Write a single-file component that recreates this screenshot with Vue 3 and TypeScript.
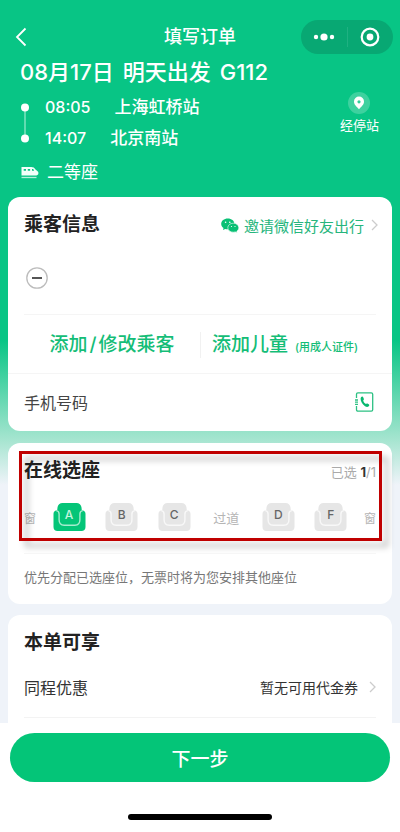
<script setup lang="ts">
import { ref } from 'vue'

interface Cell {
  kind: 'seat' | 'label'
  text: string
  slot: string
}

const cells: Cell[] = [
  { kind: 'label', text: '窗', slot: 'edge' },
  { kind: 'seat', text: 'A', slot: 'seat' },
  { kind: 'seat', text: 'B', slot: 'seat' },
  { kind: 'seat', text: 'C', slot: 'seat' },
  { kind: 'label', text: '过道', slot: 'aisle' },
  { kind: 'seat', text: 'D', slot: 'seat' },
  { kind: 'seat', text: 'F', slot: 'seat' },
  { kind: 'label', text: '窗', slot: 'edge' },
]

const selected = ref('A')
</script>

<template>
  <div class="page">
    <header class="top">
      <nav class="nav">
        <button class="back" type="button" aria-label="返回">
          <svg width="12" height="20" viewBox="0 0 12 20" fill="none" stroke="#fff" stroke-width="1.8">
            <path d="M10.500 1.500 2 10l8.500 8.500" />
          </svg>
        </button>
        <h1>填写订单</h1>
        <div class="capsule">
          <button type="button" aria-label="更多">
            <svg width="22" height="10" viewBox="0 0 22 10" fill="#fff">
              <circle cx="3" cy="5" r="2.200" /><circle cx="11" cy="5" r="3.600" /><circle cx="19" cy="5" r="2.200" />
            </svg>
          </button>
          <i class="split"></i>
          <button type="button" aria-label="关闭">
            <svg width="20" height="20" viewBox="0 0 20 20">
              <circle cx="10" cy="10" r="8.300" fill="none" stroke="#fff" stroke-width="2.200" />
              <circle cx="10" cy="10" r="3.400" fill="#fff" />
            </svg>
          </button>
        </div>
      </nav>

      <h2 class="trip"><span>08月17日</span><span>明天出发</span><span>G112</span></h2>

      <div class="route">
        <svg class="track" width="8" height="40" viewBox="0 0 8 40">
          <path d="M4 4v32" stroke="#7fe3c0" stroke-width="1.500" />
          <circle cx="4" cy="4.500" r="4" fill="#fff" /><circle cx="4" cy="35.500" r="4" fill="#fff" />
        </svg>
        <div class="stops">
          <p><time>08:05</time><span>上海虹桥站</span></p>
          <p><time>14:07</time><span>北京南站</span></p>
        </div>
        <button class="via" type="button">
          <svg width="22" height="22" viewBox="0 0 22 22">
            <circle cx="11" cy="11" r="11" fill="#fff" fill-opacity=".22" />
            <path d="M11 4.500a5 5 0 0 0-5 5c0 3.200 2.600 5 5 7.700 2.400-2.700 5-4.500 5-7.700a5 5 0 0 0-5-5z" fill="#fff" />
            <circle cx="11" cy="9.800" r="1.600" fill="#2fcf98" />
          </svg>
          经停站
        </button>
      </div>

      <p class="class">
        <svg width="18" height="13" viewBox="0 0 18 13">
          <path d="M.5 1h9.700c2 0 3.300.8 4.300 2.500l2.600 2.300c.9 1.600 0 3.600-1.800 3.600H.5z" fill="#f2fffa" />
          <path d="M2.700 3h2.300v1.700H2.700zM6.800 3h2.300v1.700H6.800zM11 3h1.200l1 1.700H11z" fill="#08c585" />
          <path d="M.5 11.500h15" stroke="#b5f0da" stroke-width="1.300" />
        </svg>
        二等座
      </p>
    </header>

    <main class="cards">
      <section class="card passenger">
        <div class="head">
          <h3>乘客信息</h3>
          <a class="invite" href="#">
            <svg width="18" height="15" viewBox="0 0 18 15">
              <path d="M6.800.5C3 .5.2 2.900.2 5.900c0 1.700.9 3.100 2.300 4.100L2 12l2.200-1.100c.9.300 1.700.4 2.600.4 3.700 0 6.600-2.400 6.600-5.400S10.500.5 6.800.5z" fill="#08c074" />
              <path d="M12.300 5.200c3.100 0 5.500 2 5.500 4.500 0 1.400-.8 2.600-2 3.500l.4 1.600-1.800-.9c-.7.200-1.400.3-2.100.3-3.100 0-5.500-2-5.500-4.500s2.400-4.500 5.500-4.500z" fill="#08c074" stroke="#fff" stroke-width=".6" />
              <circle cx="4.600" cy="4.200" r=".8" fill="#fff" /><circle cx="8.800" cy="4.200" r=".8" fill="#fff" />
              <circle cx="10.500" cy="8.500" r=".6" fill="#fff" /><circle cx="14" cy="8.500" r=".6" fill="#fff" />
            </svg>
            <span>邀请微信好友出行</span>
            <svg class="chevron" width="7" height="12" viewBox="0 0 7 12"><path d="m1 1 5 5-5 5" /></svg>
          </a>
        </div>
        <div class="person">
          <button type="button" aria-label="移除乘客">
            <svg width="22" height="22" viewBox="0 0 22 22">
              <circle cx="11" cy="11" r="10.200" fill="none" stroke="#bcbcbc" stroke-width="1.300" />
              <path d="M6 11h10" stroke="#555" stroke-width="2" />
            </svg>
          </button>
        </div>
        <div class="adders">
          <button type="button">添加<span class="slash">/</span>修改乘客</button>
          <button type="button">添加儿童<small>(用成人证件)</small></button>
        </div>
        <div class="phone">
          <span>手机号码</span>
          <button type="button" aria-label="通讯录">
            <svg width="20" height="20" viewBox="0 0 20 20" fill="none" stroke="#2cc183" stroke-width="1.300">
              <path d="M2.500 6V2.200C2.500 1.300 3 .8 3.900.8h13.400c.9 0 1.400.5 1.400 1.400v15.600c0 .9-.5 1.400-1.400 1.400H3.900c-.9 0-1.400-.5-1.400-1.400V14" />
              <path d="M1 8h3M1 10.200h3M1 12.400h3" />
              <path d="M7 5.300c.8-1 1.900-.9 2.300.1l.6 1.500c.2.700-.9 1.200-.7 1.900.4 1.200 1.200 2.200 2.200 2.900.7.400 1.300-.6 2-.2l1.300.8c.9.600.7 1.700-.3 2.300-1.500.9-3.800-.2-5.500-2.300C7.100 10.200 5.900 6.900 7 5.300z" fill="#08b86f" stroke="none" />
            </svg>
          </button>
        </div>
      </section>

      <section class="card seats">
        <div class="picker">
          <div class="head">
            <h3>在线选座</h3>
            <span class="count">已选 <b>1</b>/1</span>
          </div>
          <div class="row">
            <template v-for="(cell, i) in cells" :key="i">
              <span v-if="cell.kind === 'label'" :class="cell.slot">{{ cell.text }}</span>
              <button
                v-else
                type="button"
                :class="[cell.slot, { on: selected === cell.text }]"
                :aria-pressed="selected === cell.text"
                @click="selected = cell.text"
              >
                <svg width="33" height="28" viewBox="0 0 33 28">
                  <path class="fill" d="M9.500 0h14c2.600 0 4.800 2 5 4.600l.3 2.700c2 0 3.700 1.400 3.700 3.400V24c0 2.400-1.600 4-4 4h-24c-2.400 0-4-1.600-4-4V10.700c0-2 1.700-3.400 3.700-3.400l.3-2.700C4.700 2 6.900 0 9.500 0z" />
                  <path class="line" d="M3.200 7.600c2.200.2 2.900 1.400 2.900 3.400v5.800c0 3.400 1.800 5.400 5 5.400h10.800c3.200 0 5-2 5-5.400V11c0-2 .7-3.200 2.900-3.400" />
                </svg>
                <span>{{ cell.text }}</span>
              </button>
            </template>
          </div>
          <div class="frame"></div>
        </div>
        <p class="note">优先分配已选座位，无票时将为您安排其他座位</p>
      </section>

      <section class="card benefits">
        <h3>本单可享</h3>
        <a class="offer" href="#">
          <span>同程优惠</span>
          <em>暂无可用代金券</em>
          <svg class="chevron" width="7" height="12" viewBox="0 0 7 12"><path d="m1 1 5 5-5 5" /></svg>
        </a>
      </section>
    </main>

    <footer class="bottom">
      <button type="button" class="next">下一步</button>
      <i class="home"></i>
    </footer>
  </div>
</template>

<style>
body {
  margin: 0;
}
</style>

<style scoped>
.page {
  display: flex;
  flex-direction: column;
  min-height: 100vh;
  box-sizing: border-box;
  background: linear-gradient(#08c585 0, #08c585 340px, #a6e5d0 440px, #eff3f9 485px);
  font-family: Inter, "Noto Sans CJK SC", sans-serif;
  color: #222;
}
h1, h2, h3, p {
  margin: 0;
  font-weight: 500;
}
button {
  padding: 0;
  border: 0;
  background: none;
  font: inherit;
  color: inherit;
  cursor: pointer;
}
a {
  color: inherit;
  text-decoration: none;
}
svg {
  display: block;
  flex: none;
}
.top {
  padding: 20px 20px 0;
  color: #fff;
}
.nav {
  display: grid;
  grid-template-columns: 1fr auto 1fr;
  align-items: center;
  height: 34px;
  margin: 0 -13px;
}
.nav h1 {
  font-size: 18px;
  line-height: 24px;
}
.back {
  justify-self: start;
  padding-left: 8px;
}
.capsule {
  display: grid;
  grid-template-columns: 1fr 1px 1fr;
  align-items: center;
  justify-self: end;
  width: 92px;
  height: 34px;
  border-radius: 17px;
  background: #08a873;
}
.capsule button {
  display: grid;
  place-items: center;
}
.split {
  height: 20px;
  background: #1fb182;
}
.trip {
  display: flex;
  gap: 9px;
  margin-top: 4px;
  font-size: 22px;
  line-height: 28px;
  white-space: nowrap;
}
.route {
  display: flex;
  align-items: center;
  margin-top: 6px;
}
.track {
  margin-left: 1px;
}
.stops {
  flex: 1;
  margin-left: 16px;
  font-size: 17px;
  line-height: 31px;
}
.stops p {
  display: flex;
  gap: 24px;
}
.stops time {
  font-size: 16px;
}
.via {
  display: flex;
  flex-direction: column;
  align-items: center;
  align-self: flex-start;
  gap: 2px;
  margin-right: 1px;
  font-size: 13px;
  line-height: 18px;
}
.class {
  display: flex;
  align-items: center;
  gap: 8px;
  margin: 6px 0 0 1px;
  font-size: 17px;
  font-weight: 400;
  line-height: 24px;
}
.cards {
  display: flex;
  flex: 1;
  flex-direction: column;
  gap: 11px;
  margin-top: 13px;
  padding: 0 8px;
}
.card {
  padding: 0 16px;
  border-radius: 12px;
  background: #fff;
}
.card h3 {
  font-size: 19px;
  font-weight: 700;
  line-height: 28px;
}
.head {
  display: flex;
  align-items: center;
  justify-content: space-between;
}
.passenger {
  padding-top: 14px;
}
.invite {
  display: flex;
  align-items: center;
  gap: 5px;
  margin-right: -2px;
  color: #26b57c;
  font-size: 15px;
}
.chevron {
  margin-left: 2px;
  fill: none;
  stroke: #ccc;
  stroke-width: 1.3;
}
.person {
  display: flex;
  align-items: center;
  height: 76px;
  padding: 2px 2px 0;
  box-sizing: border-box;
  border-bottom: 1px solid #f5f5f5;
}
.adders {
  display: grid;
  grid-template-columns: 176px 1fr;
  align-items: center;
  height: 58px;
  padding-top: 2px;
  box-sizing: border-box;
  margin: 0 -16px 0 0;
  color: #14bd77;
  font-size: 19px;
  font-weight: 500;
}
.adders button {
  height: 26px;
  line-height: 26px;
  white-space: nowrap;
}
.adders button + button {
  padding-left: 11px;
  border-left: 1px solid #f1f1f1;
  text-align: left;
}
.adders small {
  margin-left: 7px;
  font-size: 11px;
}
.slash {
  margin: 0 2px;
}
.phone {
  display: flex;
  align-items: center;
  justify-content: space-between;
  height: 58px;
  box-sizing: border-box;
  margin: 0 -16px;
  padding: 0 18px 2px 16px;
  border-top: 1px solid #f5f5f5;
  color: #444;
  font-size: 16px;
}
.seats {
  margin-top: 1px;
  padding-bottom: 16px;
}
.picker {
  position: relative;
  padding: 14px 0 22px;
  border-bottom: 1px solid #f7f7f7;
}
.count {
  color: #aaa;
  font-size: 13px;
}
.count b {
  color: #333;
}
.row {
  display: flex;
  align-items: center;
  justify-content: space-between;
  margin-top: 18px;
  color: #b5b5b5;
  font-size: 12px;
}
.aisle {
  margin: 0 6px;
  font-size: 13px;
}
.seat {
  display: grid;
  margin: 0 3px;
  color: #666;
  font-size: 12px;
  font-weight: 500;
}
.seat > * {
  grid-area: 1 / 1;
}
.seat span {
  line-height: 24px;
}
.seat .fill {
  fill: #e6e6e6;
}
.seat .line {
  fill: none;
  stroke: #f8f8f8;
  stroke-width: 1.4;
}
.seat.on {
  color: #c5f5df;
}
.seat.on .fill {
  fill: #04c578;
}
.seat.on .line {
  stroke: #a5ecce;
}
.frame {
  position: absolute;
  inset: 8px -6px 12px -5px;
  border: 3px solid #c00000;
  filter: drop-shadow(6px 6px 3px rgb(0 0 0 / 28%));
  pointer-events: none;
}
.note {
  padding-top: 12px;
  color: #777;
  font-size: 13px;
  font-weight: 400;
  line-height: 22px;
}
.benefits {
  flex: 1;
  padding-top: 14px;
  border-radius: 12px 12px 0 0;
}
.offer {
  display: flex;
  align-items: center;
  height: 60px;
  border-bottom: 1px solid #f3f3f3;
  color: #333;
  font-size: 16px;
}
.offer em {
  margin: 0 9px 0 auto;
  font-size: 14px;
  font-style: normal;
}
.bottom {
  display: flex;
  flex-direction: column;
  align-items: center;
  gap: 32px;
  padding: 10px 10px 12px;
  background: #fff;
}
.next {
  width: 100%;
  height: 49px;
  border-radius: 25px;
  background: #04c578;
  color: #fff;
  font-size: 19px;
  font-weight: 500;
}
.home {
  width: 144px;
  height: 6px;
  border-radius: 3px;
  background: #000;
}
</style>
